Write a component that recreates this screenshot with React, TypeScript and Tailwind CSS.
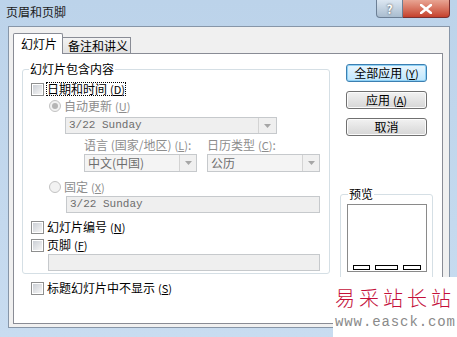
import React from "react";

const F = { fontFamily: '"Noto Sans CJK SC", "Liberation Sans", sans-serif' };
const MONO = { fontFamily: '"Liberation Mono", "Noto Sans CJK SC", monospace' };

function Mn({ k }: { k: string }) {
  return (
    <span className="text-[11px] ml-[3px]">
      (<span className="underline">{k}</span>)
    </span>
  );
}

function Check({ label, k, focus }: { label: string; k: string; focus?: boolean }) {
  return (
    <div className="flex items-center h-[14px]">
      <div className="w-[13px] h-[13px] border border-[#8e8f8f] bg-white p-[1px]">
        <div className="w-full h-full bg-gradient-to-br from-[#cbcfd5] to-[#f6f6f6]" />
      </div>
      <span
        className={
          "ml-[2px] text-[12px] leading-[14px] text-black px-[1px] " +
          (focus ? "outline outline-1 outline-dotted outline-black -outline-offset-1" : "")
        }
      >
        {label}
        <Mn k={k} />
      </span>
    </div>
  );
}

function Radio({ label, k, on }: { label: string; k: string; on?: boolean }) {
  return (
    <div className="flex items-center h-[14px]">
      <div className="w-[12px] h-[12px] rounded-full border border-[#c2c2c2] bg-[#f2f2f2] flex items-center justify-center">
        {on && <div className="w-[6px] h-[6px] rounded-full bg-[#b5b5b5]" />}
      </div>
      <span className="ml-[3px] text-[12px] leading-[14px] text-[#8d8d8d]">
        {label}
        <Mn k={k} />
      </span>
    </div>
  );
}

function Arrow() {
  return (
    <svg width="7" height="4" viewBox="0 0 7 4">
      <path d="M0 0 L7 0 L3.5 4 Z" fill="#a6a6a6" />
    </svg>
  );
}

function DisabledInput({ w, text, combo, ml }: { w: string; text?: string; combo?: boolean; ml: string }) {
  return (
    <div className={`${w} ${ml} h-[17px] border border-[#c6c9cc] bg-[#efefef] flex items-center`}>
      <span className="pl-[3px] text-[11px] leading-[15px] text-[#6d6d6d] flex-1" style={MONO}>
        {text}
      </span>
      {combo && (
        <div className="w-[18px] h-full border-l border-[#d3d3d3] flex items-center justify-center">
          <Arrow />
        </div>
      )}
    </div>
  );
}

function Select({ text }: { text: string }) {
  return (
    <div className="w-[113px] h-[18px] border border-[#c6c9cc] bg-[#f4f4f4] flex items-center">
      <span className="pl-[3px] text-[12px] leading-[16px] text-[#6d6d6d] flex-1">{text}</span>
      <div className="w-[17px] h-full border-l border-[#d3d3d3] bg-[#f0f0f0] flex items-center justify-center">
        <Arrow />
      </div>
    </div>
  );
}

function Btn({ children, def }: { children: React.ReactNode; def?: boolean }) {
  return (
    <div
      className={
        "w-[81px] h-[18px] rounded-[3px] border flex items-center justify-center text-[12px] leading-[14px] text-black " +
        (def
          ? "border-[#3c7fb1] bg-gradient-to-b from-[#eaf6fd] to-[#bee6fd] shadow-[inset_0_0_0_1px_#8fd1f5]"
          : "border-[#707070] bg-gradient-to-b from-[#f2f2f2] to-[#d6d6d6] shadow-[inset_0_0_0_1px_#fbfbfb]")
      }
    >
      {children}
    </div>
  );
}

export default function App() {
  return (
    <div className="relative w-[457px] h-[337px] overflow-hidden bg-gradient-to-b from-[#bcd3ea] to-[#c8dcf0]" style={F}>
      {/* title bar */}
      <div className="h-[26px] flex items-start">
        <span className="pl-[6px] pt-[5px] text-[12px] leading-[14px] text-[#1b1b1b]">页眉和页脚</span>
        <div className="ml-auto mr-[7px] flex">
          <div className="w-[27px] h-[18px] border border-[#6c7f95] border-t-0 rounded-bl-[4px] bg-gradient-to-b from-[#dce7f2] to-[#a9bccf] flex items-center justify-center text-[12px] font-bold text-white [text-shadow:0_0_2px_#333]">
            ?
          </div>
          <div className="w-[47px] h-[18px] border border-[#7a3030] border-t-0 border-l-0 rounded-br-[4px] bg-gradient-to-b from-[#e8a493] to-[#c4402c] flex items-center justify-center">
            <svg width="12" height="10" viewBox="0 0 12 10">
              <path d="M1 1 L11 9 M11 1 L1 9" stroke="#fff" strokeWidth="2.6" strokeLinecap="square" />
            </svg>
          </div>
        </div>
      </div>

      {/* client area */}
      <div className="ml-[8px] w-[442px] h-[302px] bg-[#f0f0f0] border border-[#8796a8] pt-[6px] pl-[4px]">
        {/* tabs */}
        <div className="flex items-end h-[20px]">
          <div className="relative z-10 w-[50px] h-[21px] -mb-[1px] border border-b-0 border-[#898c95] bg-white rounded-t-[2px] pl-[7px] pt-[3px] text-[12px] leading-[14px] text-black">
            幻灯片
          </div>
          <div className="w-[68px] h-[16px] border border-l-0 border-b-0 border-[#898c95] bg-gradient-to-b from-[#f3f3f3] to-[#e2e2e2] pl-[5px] pt-[1px] text-[12px] leading-[14px] text-black">
            备注和讲义
          </div>
        </div>

        {/* panel */}
        <div className="w-[430px] h-[271px] border border-[#898c95] bg-white flex">
          {/* left column */}
          <div className="pl-[8px] w-[316px]">
            <div className="relative mt-[15px] w-[308px] h-[205px] border border-[#d5dfe5] rounded-[3px] pl-[8px]">
              <span className="absolute left-[6px] -top-[8px] bg-white px-[1px] text-[12px] leading-[14px] text-black">
                幻灯片包含内容
              </span>
              <div className="mt-[12px]">
                <Check label="日期和时间" k="D" focus />
              </div>
              <div className="mt-[3px] ml-[18px]">
                <Radio label="自动更新" k="U" on />
              </div>
              <div className="mt-[4px] flex">
                <DisabledInput w="w-[212px]" ml="ml-[34px]" text="3/22 Sunday" combo />
              </div>
              <div className="mt-[4px] h-[14px] flex text-[12px] leading-[14px] text-[#8d8d8d]">
                <span className="ml-[53px] w-[123px]">
                  语言 (国家/地区)<Mn k="L" />:
                </span>
                <span>
                  日历类型<Mn k="C" />:
                </span>
              </div>
              <div className="mt-[2px] flex ml-[53px] gap-[10px]">
                <Select text="中文(中国)" />
                <Select text="公历" />
              </div>
              <div className="mt-[8px] ml-[18px]">
                <Radio label="固定" k="X" />
              </div>
              <div className="mt-[2px] flex">
                <DisabledInput w="w-[254px]" ml="ml-[35px]" text="3/22 Sunday" />
              </div>
              <div className="mt-[7px]">
                <Check label="幻灯片编号" k="N" />
              </div>
              <div className="mt-[4px]">
                <Check label="页脚" k="F" />
              </div>
              <div className="mt-[2px] flex">
                <DisabledInput w="w-[272px]" ml="ml-[17px]" />
              </div>
            </div>
            <div className="mt-[7px] ml-[9px]">
              <Check label="标题幻灯片中不显示" k="S" />
            </div>
          </div>

          {/* right column */}
          <div className="ml-[16px] pt-[10px] flex flex-col">
            <div className="flex flex-col gap-[9px]">
              <Btn def>
                全部应用<Mn k="Y" />
              </Btn>
              <Btn>
                应用<Mn k="A" />
              </Btn>
              <Btn>取消</Btn>
            </div>
            <div className="relative mt-[58px] -ml-[6px] w-[93px] h-[88px] border border-[#d5dfe5] rounded-[3px] pl-[6px] pt-[9px]">
              <span className="absolute left-[7px] -top-[8px] bg-white px-[1px] text-[12px] leading-[14px] text-black">
                预览
              </span>
              <div className="w-[80px] h-[68px] border border-[#8a8a8a] bg-white flex items-end px-[5px] pb-[1px] gap-[5px]">
                <div className="w-[17px] h-[5px] border border-black" />
                <div className="w-[24px] h-[5px] border border-black" />
                <div className="w-[18px] h-[5px] border border-black" />
              </div>
            </div>
          </div>
        </div>
      </div>

      {/* watermark */}
      <div className="absolute left-[333px] top-[277px] w-[124px] h-[60px] bg-white flex flex-col items-start pl-[2px]">
        <span className="mt-[9px] text-[20px] leading-[24px] tracking-[4px] font-light text-[#c4103a]">易采站长站</span>
        <span className="mt-[5px] text-[14px] leading-[14px] tracking-[0.9px] text-[#8a8a8a]" style={MONO}>
          www.easck.com
        </span>
      </div>
    </div>
  );
}
